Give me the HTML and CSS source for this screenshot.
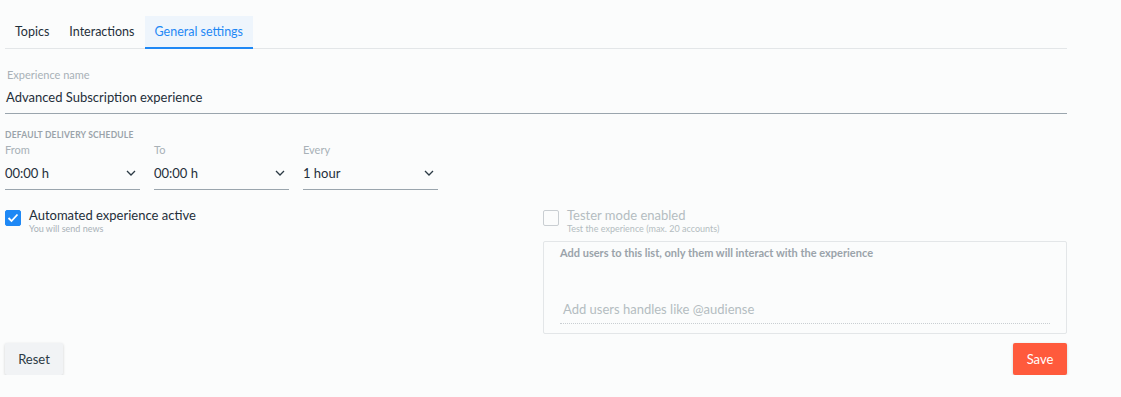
FILE: index.html
```html
<!doctype html>
<html lang="en">
<head>
  <meta charset="utf-8">
  <link rel="stylesheet" href="styles.css">
  <title>Experience settings</title>
</head>
<body>
  <div class="page">
    <nav class="tabs">
      <a class="tab">Topics</a>
      <a class="tab">Interactions</a>
      <a class="tab active">General settings</a>
    </nav>

    <div class="field name-field">
      <label class="field-label">Experience name</label>
      <div class="field-value">Advanced Subscription experience</div>
    </div>

    <div class="section-title">DEFAULT DELIVERY SCHEDULE</div>
    <div class="schedule">
      <div class="select">
        <label class="field-label">From</label>
        <div class="select-box">
          <span>00:00 h</span>
          <svg class="chevron" width="10" height="6" viewBox="0 0 10 6"><path d="M1 1l4 4 4-4" fill="none" stroke="#2b3a44" stroke-width="1.3"/></svg>
        </div>
      </div>
      <div class="select">
        <label class="field-label">To</label>
        <div class="select-box">
          <span>00:00 h</span>
          <svg class="chevron" width="10" height="6" viewBox="0 0 10 6"><path d="M1 1l4 4 4-4" fill="none" stroke="#2b3a44" stroke-width="1.3"/></svg>
        </div>
      </div>
      <div class="select">
        <label class="field-label">Every</label>
        <div class="select-box">
          <span>1 hour</span>
          <svg class="chevron" width="10" height="6" viewBox="0 0 10 6"><path d="M1 1l4 4 4-4" fill="none" stroke="#2b3a44" stroke-width="1.3"/></svg>
        </div>
      </div>
    </div>

    <div class="options">
      <div class="left-col">
        <div class="check-row">
          <span class="checkbox checked">
            <svg width="12" height="10" viewBox="0 0 12 10"><path d="M1.5 5l3 3 6-6.5" fill="none" stroke="#fff" stroke-width="1.8"/></svg>
          </span>
          <div>
            <div class="check-title">Automated experience active</div>
            <div class="check-sub">You will send news</div>
          </div>
        </div>
      </div>
      <div class="right-col">
        <div class="check-row disabled">
          <span class="checkbox"></span>
          <div>
            <div class="check-title">Tester mode enabled</div>
            <div class="check-sub">Test the experience (max. 20 accounts)</div>
          </div>
        </div>
        <div class="users-box">
          <div class="users-title">Add users to this list, only them will interact with the experience</div>
          <div class="users-input">Add users handles like @audiense</div>
        </div>
      </div>
    </div>

    <div class="actions">
      <button class="btn reset">Reset</button>
      <button class="btn save">Save</button>
    </div>
  </div>
</body>
</html>
```

FILE: styles.css
```css
html{
  height: 100%;
}

body{
  margin: 0;
  background: #fbfcfc;
  font-family: Lato, "Open Sans", Arial, sans-serif;
  color: #1f2f3a;
}

.page{
  width: 1062px;
  padding: 16px 0 0 5px;
}

.tabs{
  display: flex;
  border-bottom: 1px solid #e3e6e8;
  height: 32px;
}

.tab{
  padding: 0 10px;
  line-height: 31px;
  font-size: 12.5px;
  color: #1f2f3a;
  border-bottom: 2px solid transparent;
}

.tab.active{
  color: #1e88f5;
  background: #eef5fc;
  border-bottom-color: #1e88f5;
  height: 31px;
}

.field-label{
  display: block;
  font-size: 11px;
  color: #a8b1b7;
}

.name-field{
  margin-top: 19px;
}

.name-field .field-label{
  padding-left: 2px;
}

.field-value{
  font-size: 13px;
  padding: 8px 0 8px 1px;
  border-bottom: 1px solid #9aa5ad;
}

.section-title{
  margin-top: 16px;
  font-size: 8.5px;
  font-weight: bold;
  color: #9aa3aa;
  letter-spacing: 0.2px;
}

.schedule{
  display: flex;
  gap: 14px;
  margin-top: 3px;
}

.select{
  width: 135px;
}

.select-box{
  display: flex;
  align-items: center;
  justify-content: space-between;
  font-size: 13px;
  padding: 9px 0 8px 0;
  border-bottom: 1px solid #9aa5ad;
}

.chevron{
  margin-right: 4px;
}

.options{
  display: flex;
  margin-top: 18px;
}

.left-col{
  width: 538px;
}

.right-col{
  flex: 1;
}

.check-row{
  display: flex;
  gap: 8px;
}

.checkbox{
  width: 14px;
  height: 14px;
  border: 1px solid #c9ced2;
  border-radius: 2px;
  margin-top: 2px;
  display: flex;
  align-items: center;
  justify-content: center;
}

.checkbox.checked{
  background: #1e88f5;
  border-color: #1e88f5;
}

.check-title{
  font-size: 13px;
  line-height: 14px;
}

.check-sub{
  font-size: 9px;
  color: #a8b1b7;
  margin-top: 1px;
}

.disabled .check-title{
  color: #b4bcc1;
}

.disabled .check-sub{
  color: #b4bcc1;
}

.users-box{
  margin-top: 7px;
  border: 1px solid #e3e6e8;
  border-radius: 2px;
  height: 91px;
  padding: 0 16px 0 16px;
}

.users-title{
  font-size: 11px;
  font-weight: bold;
  color: #9aa3aa;
  margin-top: 4px;
}

.users-input{
  margin-top: 42px;
  font-size: 13px;
  color: #b4bcc1;
  padding: 0 0 6px 3px;
  border-bottom: 1px dotted #c9ced2;
}

.actions{
  display: flex;
  justify-content: space-between;
  margin-top: 9px;
}

.btn{
  border: none;
  height: 32px;
  font-family: Lato, "Open Sans", Arial, sans-serif;
  font-size: 13px;
  border-radius: 2px;
  box-shadow: 0 1px 3px rgba(0, 0, 0, 0.18);
}

.reset{
  width: 58px;
  background: #f1f3f5;
  color: #2b3a44;
}

.save{
  width: 54px;
  background: #ff5a3c;
  color: #fff;
}
```
